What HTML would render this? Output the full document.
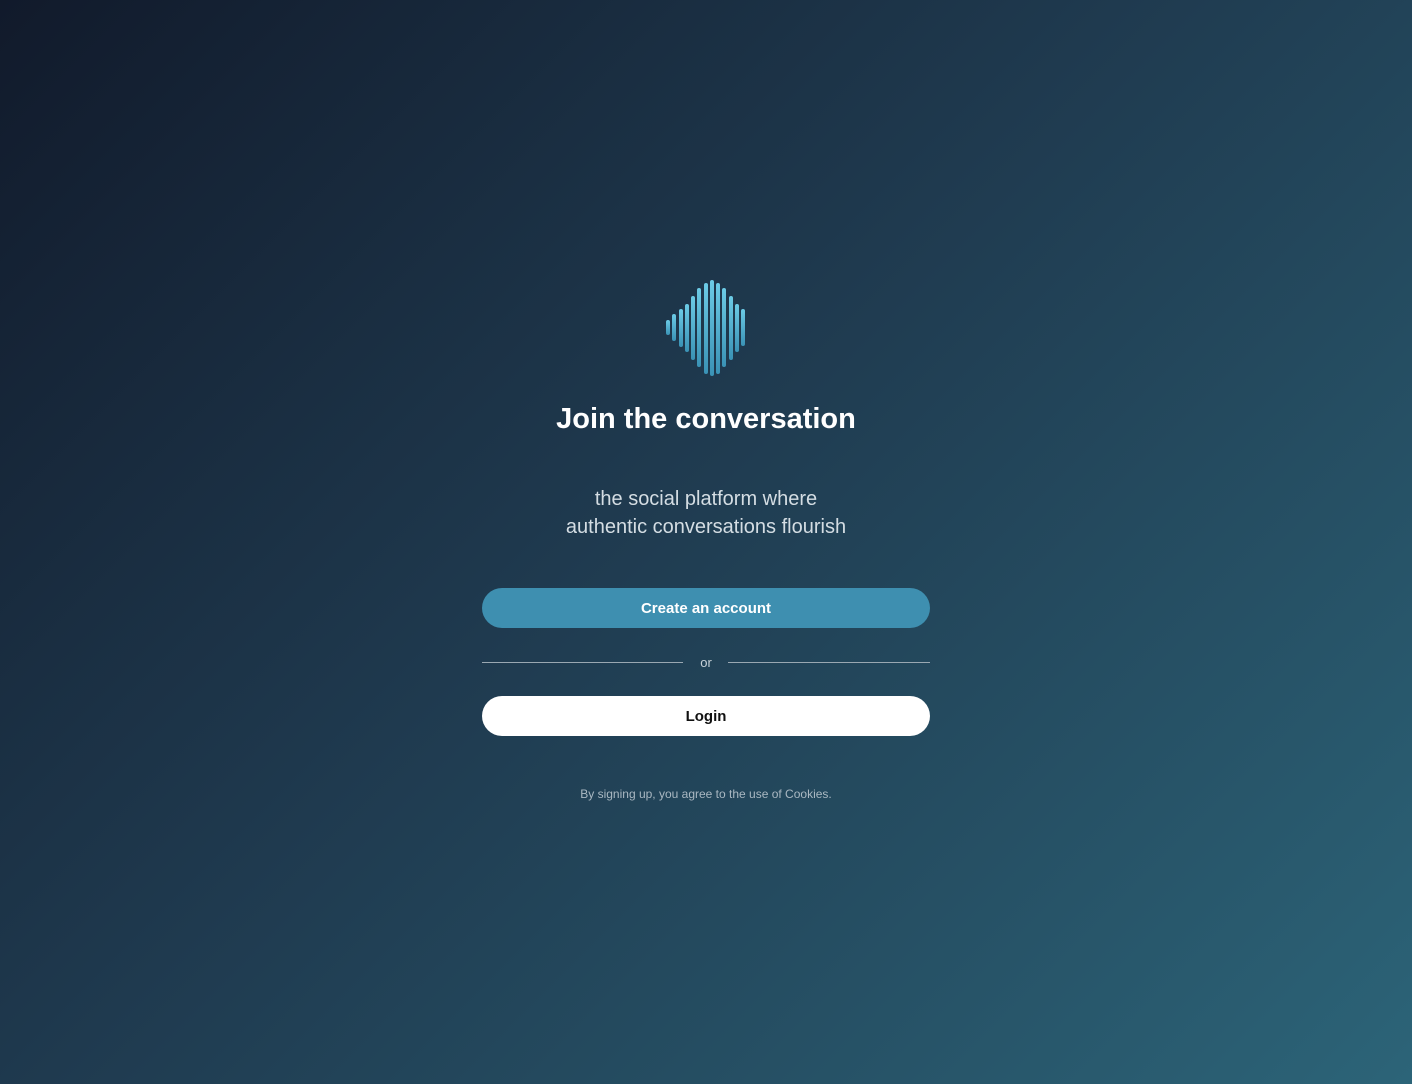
<!DOCTYPE html>
<html><head><meta charset="utf-8"><style>
html,body{margin:0;padding:0;width:1412px;height:1084px;overflow:hidden}
body{background:linear-gradient(135deg,#111a2b 0%,#1f3a4f 45%,#2c6478 100%);font-family:"Liberation Sans",sans-serif;position:relative}
.t{position:absolute;left:0;width:1412px;text-align:center}
h1{margin:0;font-size:29px;font-weight:bold;color:#fff;top:403px}
.sub{top:485px;font-size:20px;line-height:28px;color:#d4dde3}
.btn{position:absolute;left:482px;width:448px;height:40px;border-radius:20px;text-align:center;line-height:42px;font-size:15px;font-weight:bold}
.c{top:588px;background:#3e8fb0;color:#fff}
.l{top:696px;background:#fff;color:#111}
.line{position:absolute;top:662px;height:1px;background:#9aa8b2;width:201px}
.or{top:655px;font-size:13px;color:#c8d2d8}
.fine{top:787px;font-size:12px;color:#aab8c2}
</style></head><body>
<svg style="position:absolute;left:0;top:0" width="1412" height="1084">
<defs><linearGradient id="g" x1="0" y1="0" x2="0" y2="1"><stop offset="0" stop-color="#6ccbe6"/><stop offset="1" stop-color="#3a92b5"/></linearGradient></defs>
<g fill="url(#g)">
<rect x="666" y="320" width="4" height="15" rx="2"/>
<rect x="672" y="314" width="4" height="27" rx="2"/>
<rect x="679" y="309" width="4" height="38" rx="2"/>
<rect x="685" y="304" width="4" height="48" rx="2"/>
<rect x="691" y="296" width="4" height="64" rx="2"/>
<rect x="697" y="288" width="4" height="79" rx="2"/>
<rect x="704" y="283" width="4" height="91" rx="2"/>
<rect x="710" y="280" width="4" height="96" rx="2"/>
<rect x="716" y="283" width="4" height="91" rx="2"/>
<rect x="722" y="288" width="4" height="79" rx="2"/>
<rect x="729" y="296" width="4" height="64" rx="2"/>
<rect x="735" y="304" width="4" height="48" rx="2"/>
<rect x="741" y="309" width="4" height="37" rx="2"/>
</g></svg>
<h1 class="t">Join the conversation</h1>
<div class="t sub">the social platform where<br>authentic conversations flourish</div>
<div class="btn c">Create an account</div>
<div class="line" style="left:482px"></div>
<div class="line" style="left:728px;width:202px"></div>
<div class="t or">or</div>
<div class="btn l">Login</div>
<div class="t fine">By signing up, you agree to the use of Cookies.</div>
</body></html>
